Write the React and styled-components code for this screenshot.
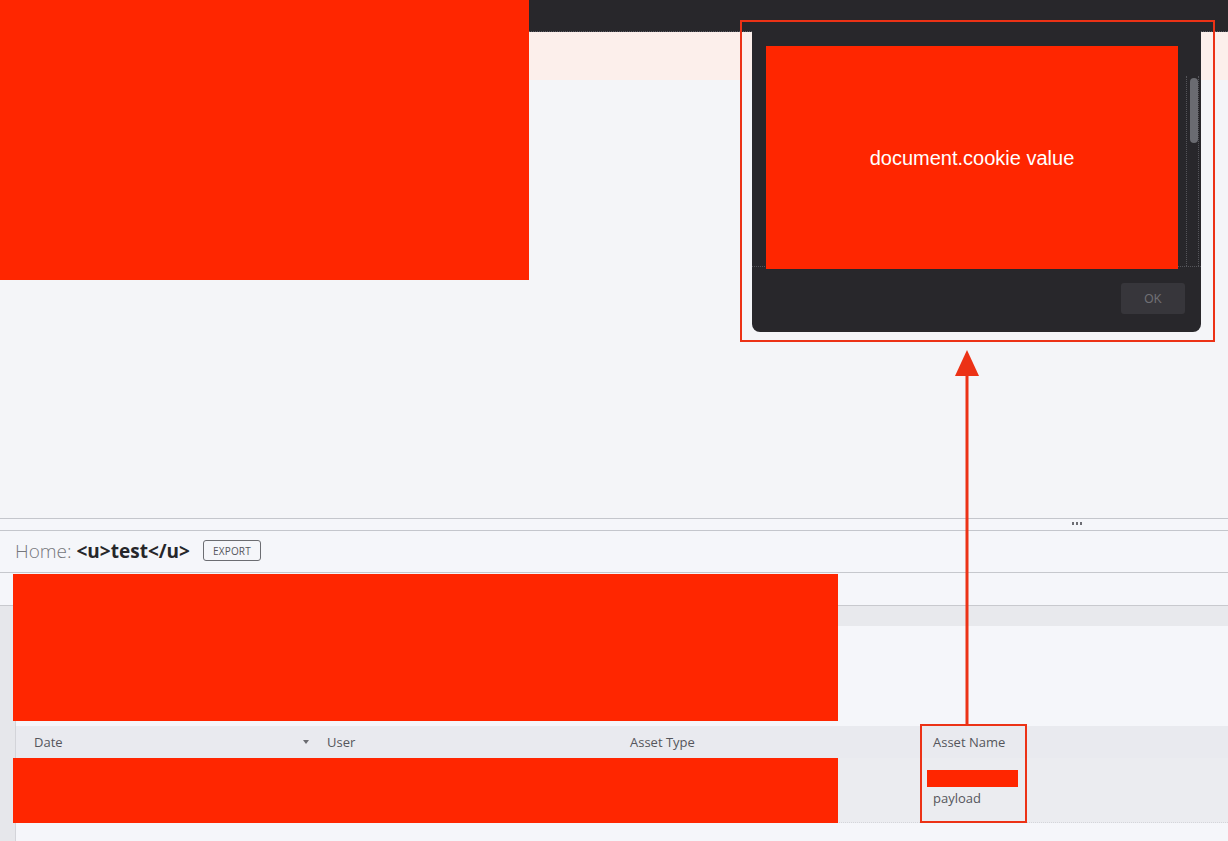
import React from "react";
import styled, { createGlobalStyle } from "styled-components";

const Global = createGlobalStyle`
  html, body { margin: 0; padding: 0; }
  body { font-family: "Open Sans", "Noto Sans", sans-serif; background: #f5f6fa; }
  * { box-sizing: border-box; }
`;

const RED = "#ff2600";
const MARK = "#ec3216";

const Page = styled.div`
  position: relative;
  width: 1228px;
  min-height: 841px;
  height: 841px;
  overflow: hidden;
  display: flex;
  flex-direction: column;
  background: #f5f6fa;
`;

const TopBar = styled.div`
  height: 32px;
  flex: none;
  background: #28272b;
  border-bottom: 1px dotted #5c5c62;
`;

const Banner = styled.div`
  height: 48px;
  flex: none;
  background: #fcefeb;
`;

const Workspace = styled.div`
  height: 438px;
  flex: none;
  background: #f4f5f8;
`;

const Splitter = styled.div`
  height: 13px;
  flex: none;
  border-top: 1px solid #c4c6cc;
  border-bottom: 1px solid #c4c6cc;
  background: #f5f6fa;
  display: flex;
  justify-content: flex-end;
  padding-right: 146px;
  padding-top: 3px;
`;

const Grip = styled.div`
  display: flex;
  gap: 2px;
  height: 3px;
`;

const Dot = styled.span`
  width: 2px;
  height: 3px;
  background: #6d6e74;
`;

const TitleBar = styled.div`
  height: 42px;
  flex: none;
  border-bottom: 1px solid #c6c8cd;
  display: flex;
  align-items: center;
  padding: 0 0 2px 15px;
  gap: 13px;
`;

const Title = styled.div`
  font-size: 19px;
  color: #76777c;
  font-weight: 300;
  letter-spacing: 0;
`;

const TitleName = styled.span`
  font-weight: 700;
  color: #26262a;
`;

const ExportButton = styled.button`
  height: 21px;
  width: 58px;
  padding: 0;
  border: 1px solid #6c6d72;
  border-radius: 3px;
  background: transparent;
  font-family: "Open Sans", sans-serif;
  font-size: 10px;
  color: #56575c;
  letter-spacing: 0.2px;
  text-transform: uppercase;
`;

const Toolbar = styled.div`
  height: 32px;
  flex: none;
`;

const Body = styled.div`
  flex: 1;
  display: flex;
`;

const Gutter = styled.div`
  width: 16px;
  flex: none;
  background: #e6e7eb;
  border-top: 1px solid #c8c9ce;
  border-right: 1px solid #d3d4d9;
`;

const Main = styled.div`
  flex: 1;
  display: flex;
  flex-direction: column;
`;

const FilterBand = styled.div`
  height: 21px;
  background: #e8e9ed;
  border-top: 1px solid #c8c9ce;
`;

const Spacer = styled.div`
  height: 100px;
`;

const HeaderRow = styled.div`
  display: grid;
  grid-template-columns: 293px 303px 303px 1fr;
  height: 32px;
  background: #e9eaef;
  align-items: center;
`;

const HeadCell = styled.div`
  display: flex;
  align-items: center;
  justify-content: space-between;
  padding-left: 18px;
  padding-right: ${(p) => (p.$sorted ? "0" : "8px")};
  font-size: 13px;
  color: #55565c;
`;

const Caret = styled.span`
  width: 0;
  height: 0;
  border-left: 3px solid transparent;
  border-right: 3px solid transparent;
  border-top: 4px solid #6a6b70;
`;

const DataRow = styled.div`
  display: grid;
  grid-template-columns: 293px 303px 303px 1fr;
  height: 65px;
  background: #ebecf0;
  border-bottom: 1px dotted #d4d5da;
`;

const DataCell = styled.div`
  padding: 12px 0 0 18px;
  font-size: 13px;
  color: #55565c;
  display: flex;
  flex-direction: column;
`;

const InlineRedaction = styled.span`
  display: block;
  width: 91px;
  height: 17px;
  margin-left: -6px;
  background: ${RED};
  margin-bottom: 2px;
`;

const Redaction = styled.div`
  position: absolute;
  background: ${RED};
  left: ${(p) => p.$x}px;
  top: ${(p) => p.$y}px;
  width: ${(p) => p.$w}px;
  height: ${(p) => p.$h}px;
`;

const Dialog = styled.div`
  position: absolute;
  left: 752px;
  top: 0;
  width: 449px;
  height: 332px;
  background: #28272b;
  border-radius: 0 0 8px 8px;
  display: flex;
  flex-direction: column;
`;

const DialogBody = styled.div`
  height: 267px;
  display: flex;
  padding: 46px 2px 0 14px;
  border-bottom: 1px dotted #55555a;
  gap: 8px;
`;

const CookieBox = styled.div`
  width: 412px;
  height: 223px;
  background: ${RED};
  color: #ffffff;
  font-family: "Liberation Sans", Arial, sans-serif;
  font-size: 20px;
  display: flex;
  align-items: center;
  justify-content: center;
  padding-top: 2px;
`;

const ScrollTrack = styled.div`
  width: 13px;
  margin-top: 30px;
  border-left: 1px dotted #55555a;
  border-right: 1px dotted #55555a;
  padding: 2px 2px 0 3px;
`;

const ScrollThumb = styled.div`
  height: 65px;
  width: 8px;
  border-radius: 4px;
  background: #6a6b71;
`;

const DialogFooter = styled.div`
  flex: 1;
  display: flex;
  justify-content: flex-end;
  padding: 16px 16px 0 0;
`;

const OkButton = styled.button`
  width: 64px;
  height: 31px;
  border: none;
  border-radius: 3px;
  background: #37363b;
  color: #6f6f74;
  font-family: "Liberation Sans", Arial, sans-serif;
  font-size: 12px;
  padding: 0;
`;

const Outline = styled.div`
  position: absolute;
  left: ${(p) => p.$x}px;
  top: ${(p) => p.$y}px;
  width: ${(p) => p.$w}px;
  height: ${(p) => p.$h}px;
  border: 2px solid ${MARK};
  pointer-events: none;
`;

const ArrowSvg = styled.svg`
  position: absolute;
  left: 950px;
  top: 348px;
  overflow: visible;
`;

export default function App() {
  return (
    <>
      <Global />
      <Page>
        <TopBar />
        <Banner />
        <Workspace />
        <Splitter>
          <Grip>
            <Dot />
            <Dot />
            <Dot />
          </Grip>
        </Splitter>
        <TitleBar>
          <Title>
            Home: <TitleName>&lt;u&gt;test&lt;/u&gt;</TitleName>
          </Title>
          <ExportButton>Export</ExportButton>
        </TitleBar>
        <Toolbar />
        <Body>
          <Gutter />
          <Main>
            <FilterBand />
            <Spacer />
            <HeaderRow>
              <HeadCell $sorted>
                Date
                <Caret />
              </HeadCell>
              <HeadCell>User</HeadCell>
              <HeadCell>Asset Type</HeadCell>
              <HeadCell>Asset Name</HeadCell>
            </HeaderRow>
            <DataRow>
              <DataCell />
              <DataCell />
              <DataCell />
              <DataCell>
                <InlineRedaction />
                payload
              </DataCell>
            </DataRow>
          </Main>
        </Body>

        <Redaction $x={0} $y={0} $w={529} $h={280} />
        <Redaction $x={13} $y={574} $w={825} $h={147} />
        <Redaction $x={13} $y={758} $w={825} $h={65} />

        <Dialog>
          <DialogBody>
            <CookieBox>document.cookie value</CookieBox>
            <ScrollTrack>
              <ScrollThumb />
            </ScrollTrack>
          </DialogBody>
          <DialogFooter>
            <OkButton>OK</OkButton>
          </DialogFooter>
        </Dialog>

        <Outline $x={740} $y={20} $w={475} $h={322} />
        <Outline $x={920} $y={724} $w={107} $h={99} />
        <ArrowSvg width="34" height="380" viewBox="0 0 34 380">
          <polygon points="17,2 5,28 29,28" fill={MARK} />
          <rect x="15.5" y="26" width="3" height="352" fill={MARK} />
        </ArrowSvg>
      </Page>
    </>
  );
}
